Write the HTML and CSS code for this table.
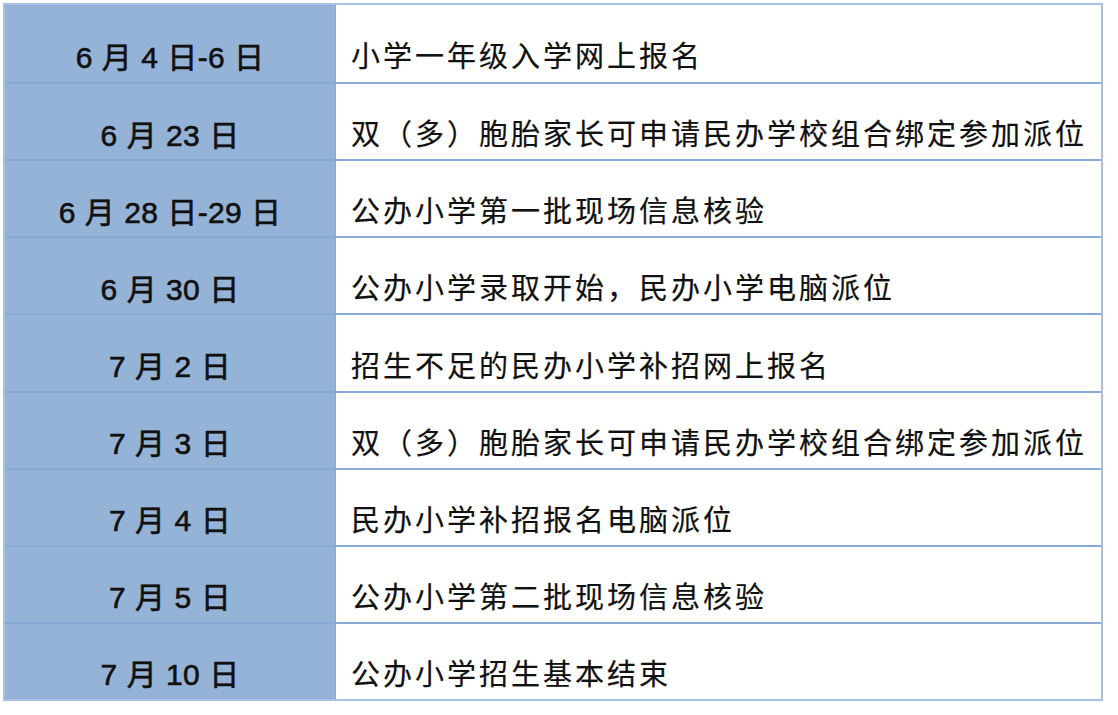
FILE: index.html
```html
<!DOCTYPE html>
<html lang="zh-CN">
<head>
<meta charset="utf-8">
<title>招生时间表</title>
<link rel="stylesheet" href="styles.css">
</head>
<body>
<div class="schedule">
  <div class="row"><div class="date">6 月 4 日-6 日</div><div class="event">小学一年级入学网上报名</div></div>
  <div class="row"><div class="date">6 月 23 日</div><div class="event">双（多）胞胎家长可申请民办学校组合绑定参加派位</div></div>
  <div class="row"><div class="date">6 月 28 日-29 日</div><div class="event">公办小学第一批现场信息核验</div></div>
  <div class="row"><div class="date">6 月 30 日</div><div class="event">公办小学录取开始，民办小学电脑派位</div></div>
  <div class="row"><div class="date">7 月 2 日</div><div class="event">招生不足的民办小学补招网上报名</div></div>
  <div class="row"><div class="date">7 月 3 日</div><div class="event">双（多）胞胎家长可申请民办学校组合绑定参加派位</div></div>
  <div class="row"><div class="date">7 月 4 日</div><div class="event">民办小学补招报名电脑派位</div></div>
  <div class="row"><div class="date">7 月 5 日</div><div class="event">公办小学第二批现场信息核验</div></div>
  <div class="row"><div class="date">7 月 10 日</div><div class="event">公办小学招生基本结束</div></div>
</div>
</body>
</html>
```
FILE: styles.css
```css
html, body {
  margin: 0;
  padding: 0;
  background: #ffffff;
}
body {
  padding: 3px 0 0 3px;
  font-family: "Liberation Sans", "Noto Sans CJK SC", sans-serif;
  color: #111111;
}
.schedule {
  width: 1100px;
  box-sizing: border-box;
  border: 2px solid #a9c1e0;
  display: grid;
  grid-template-rows: repeat(9, 1fr);
  height: 698px;
}
.row {
  display: grid;
  grid-template-columns: 331px 1fr;
  border-top: 2px solid #86a9d8;
}
.row:first-child {
  border-top: none;
}
.date, .event {
  display: flex;
  align-items: center;
  padding-top: 28px;
  font-size: 29px;
  line-height: 1.2;
}
.date {
  background: #95b3d7;
  justify-content: center;
  border-right: 1px solid #86a9d8;
  font-size: 30px;
  letter-spacing: 0.3px;
  word-spacing: 0.5px;
  -webkit-text-stroke: 0.6px #111111;
}
.event {
  padding-left: 15px;
  letter-spacing: 3px;
  white-space: nowrap;
  -webkit-text-stroke: 0.2px #111111;
}
```
